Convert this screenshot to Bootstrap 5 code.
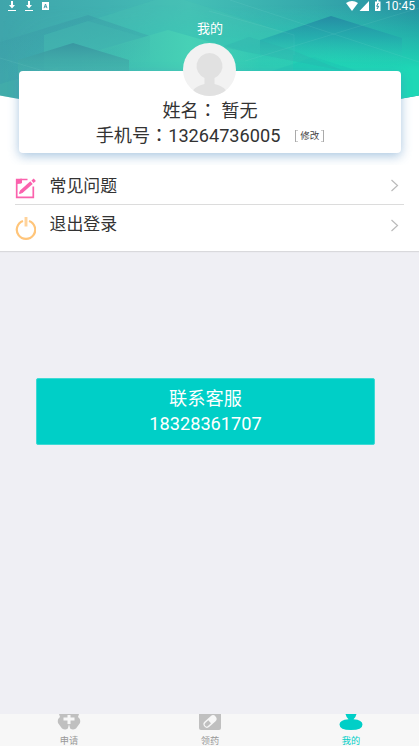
<!DOCTYPE html>
<html lang="zh-CN">
<head>
<meta charset="utf-8">
<meta name="viewport" content="width=device-width, initial-scale=1">
<title>我的</title>
<link href="https://cdn.jsdelivr.net/npm/bootstrap@5.3.0/dist/css/bootstrap.min.css" rel="stylesheet">
<style>
body{font-family:Roboto,"Noto Sans CJK SC",sans-serif;background:#efeff4;color:#333;height:746px;overflow:hidden}
svg{display:block;flex:none}
.profile-top{height:165px}
.hero-art{left:0;top:0;z-index:0}
.status-line{height:12px;padding:0 4px 0 7px;font-size:12px;line-height:13px}
.page-title{font-size:13px;line-height:18px;margin-top:8px;padding-left:1px}
.info-card{width:382px;height:82px;margin:33px 0 0 19px;border-radius:4px;box-shadow:0 3px 11px rgba(75,135,190,.48);font-size:18.15px;line-height:26px;padding-top:27px}
.info-line{height:25.5px}
.avatar{left:183px;top:43px;z-index:2}
.wide-colon{font-family:"Noto Sans CJK TC",sans-serif;line-height:1}
.edit-link{font-size:9.5px;line-height:11px;width:29px;height:12px;border:solid #aaa;border-width:0 1px;color:#444;margin-left:15px;background:linear-gradient(#ccc,#ccc) 0 0/2px 1px no-repeat,linear-gradient(#ccc,#ccc) 0 100%/2px 1px no-repeat,linear-gradient(#ccc,#ccc) 100% 0/2px 1px no-repeat,linear-gradient(#ccc,#ccc) 100% 100%/2px 1px no-repeat}
.menu-box{height:86px;box-shadow:0 1px 1px #d9d9dc}
.menu-line{height:39px;font-size:16.9px;line-height:42px;margin:0 15px;padding-right:5px}
.menu-text{margin-left:13.500px}
.menu-line+.menu-line{border-top:1px solid #dcdcdc;line-height:38px;height:46px}
.service-btn{width:339px;height:67px;margin:127px 0 0 36px;border-radius:2px;background:#00cfc7;border:1px solid #3edad4;font-size:18.2px;line-height:25px;padding-top:7px}
.tab-bar{height:32px;background:#f7f7f7;font-size:9.2px;line-height:12px;color:#999;padding:0 38px 0 39px}
.tab-item{width:60px}
.tab-item svg{margin-bottom:4px}
.tab-item.current{color:#00cfc7}
</style>
<script src="https://cdn.jsdelivr.net/npm/bootstrap@5.3.0/dist/js/bootstrap.bundle.min.js"></script>
</head>
<body class="d-flex flex-column">
<header class="profile-top bg-white position-relative overflow-hidden">
<svg class="hero-art position-absolute" width="419" height="100" viewBox="0 0 419 100">
<defs>
<linearGradient id="base" x1="0" y1="0" x2="1" y2="0"><stop stop-color="#3fa5ab"/><stop offset=".25" stop-color="#41b1b1"/><stop offset=".45" stop-color="#44bfb6"/><stop offset=".75" stop-color="#35a9ac"/><stop offset="1" stop-color="#278fa1"/></linearGradient>
<linearGradient id="low" x1="0" y1="0" x2="0" y2="1"><stop offset=".05" stop-color="#22d8b6" stop-opacity="0"/><stop offset=".7" stop-color="#1ed8b6"/></linearGradient>
<linearGradient id="fade" x1="0" y1="0" x2="1" y2="0"><stop stop-color="#fff" stop-opacity="0"/><stop offset=".2" stop-color="#fff" stop-opacity=".15"/><stop offset=".55" stop-color="#fff" stop-opacity=".7"/><stop offset=".8" stop-color="#fff"/></linearGradient>
<linearGradient id="ridge" x1="0" y1="0" x2="0" y2="1"><stop stop-color="#2488a3"/><stop offset=".35" stop-color="#23a8ad" stop-opacity=".75"/><stop offset=".8" stop-color="#2bd5b8" stop-opacity="0"/></linearGradient>
<linearGradient id="hill" x1="0" y1="0" x2="0" y2="1"><stop stop-color="#38929f"/><stop offset=".5" stop-color="#45b4ab" stop-opacity=".75"/><stop offset="1" stop-color="#45b4ab" stop-opacity=".3"/></linearGradient>
<linearGradient id="shade" x1="0" y1="0" x2="0" y2="1"><stop stop-color="#3998a6"/><stop offset=".7" stop-color="#3998a6" stop-opacity="0"/></linearGradient>
<linearGradient id="mint" x1="0" y1="0" x2="1" y2="0"><stop stop-color="#45bdae" stop-opacity=".2"/><stop offset=".6" stop-color="#48d2b6"/><stop offset="1" stop-color="#48d2b6" stop-opacity="0"/></linearGradient>
<mask id="m"><rect width="419" height="100" fill="url(#fade)"/></mask>
<clipPath id="c"><path d="M0 0H419V95.500Q400 99 380 102H40Q18 99 0 95.500Z"/></clipPath>
</defs>
<g clip-path="url(#c)">
<path fill="url(#base)" d="M0 0h419v100H0z"/>
<path fill="url(#low)" mask="url(#m)" d="M0 0h419v100H0z"/>
<path fill="#4bc9b5" opacity=".25" d="M44 35L155 0h30l108 35v65H44z"/>
<path fill="url(#shade)" opacity=".5" d="M0 42L88 15l62 21v64H0z"/>
<path fill="#45bbb1" opacity=".35" d="M44 35L88 21l55 16-61 23H44z"/>
<path fill="url(#mint)" opacity=".9" d="M82 55L168 30l92 26v44H82z"/>
<path fill="url(#hill)" opacity=".85" d="M18 60L73 43l56 17v40H18z"/>
<path fill="#48b8a9" opacity=".35" d="M0 84l58-17v33H0z"/>
<path fill="url(#ridge)" opacity=".9" d="M260 40L331 16l71 22v42H260z"/>
<path fill="#2fa9ac" opacity=".25" d="M222 47l27-10 45 14 50 20z"/>
<path fill="#1fbdb2" opacity=".3" d="M272 71l42-14 44 14z"/>
<path fill="none" stroke="#8ce0d7" stroke-opacity=".12" d="M0 58l90 27M230 0l189 62M245 61L419 8M209 11l85 24v20"/>
</g>
</svg>
<div class="status-line d-flex position-relative text-white">
<svg width="50" height="12" viewBox="0 0 50 12" fill="#fff"><path d="M4 1h2v4h2L5 8.500 2 5h2zM1 10h8v1H1zM21 1h2v4h2l-3 3.500L19 5h2zM18 10h8v1h-8zM35 2h7v8h-7z"/><path d="M37 8.200l1.500-4.200 1.500 4.200M37.500 6.800h2" fill="none" stroke="#3a9ba8" stroke-width=".9"/></svg>
<svg class="ms-auto" width="38" height="12" viewBox="0 0 38 12" fill="#fff"><path d="M3 3q6-4 12 0L9 11zM26 1v10h-9.500zM32 1.500h2V0h1.500v1.500h2V11H32z"/><path d="M35.300 3l-1.600 3.300h2L34 9" fill="none" stroke="#2788a0" stroke-width="1"/></svg>
<span class="ms-1">10:45</span>
</div>
<div class="page-title position-relative text-center text-white">我的</div>
<svg class="avatar position-absolute" width="53" height="53" viewBox="0 0 53 53"><clipPath id="av"><circle cx="26.500" cy="26.500" r="26.500"/></clipPath><g clip-path="url(#av)"><path fill="#f2f2f2" d="M0 0h53v53H0z"/><path fill="#e1e1e1" d="M26.500 10a13 13 0 0 0-5 25v6c-5 1-9 3-12 7v5h34v-5c-3-4-7-6-12-7v-6a13 13 0 0 0-5-25z"/></g></svg>
<section class="info-card bg-white position-relative">
<div class="info-line d-flex justify-content-center"><span>姓名<span class="wide-colon" lang="zh-TW">：</span> 暂无</span></div>
<div class="info-line d-flex justify-content-center align-items-center"><span>手机号<span class="wide-colon" lang="zh-TW">：</span>13264736005</span><a class="edit-link text-center text-decoration-none">修改</a></div>
</section>
</header>
<nav class="menu-box bg-white">
<div class="menu-line d-flex">
<svg class="mt-2" width="21" height="26" viewBox="0 0 21 26"><g transform="translate(0.500 4.500)" fill="none" stroke="#fb62ad"><path stroke-width="1.700" d="M12 2H1.200v17.800h16.600V9"/><path d="M1 6V3L6 1.500v4z" fill="#fb62ad"/><path stroke-width="3.600" d="M6 14L16 5.200"/><path stroke-width="3.200" d="M17 4.300l2.300-2"/><path d="M4 16l1-3 2 2z" fill="#fb62ad"/></g></svg>
<span class="menu-text">常见问题</span>
<svg class="ms-auto" width="8" height="40" viewBox="0 0 8 40"><path d="M.5 15L6.500 20.500.5 26" fill="none" stroke="#bbb" stroke-width="1.200"/></svg>
</div>
<div class="menu-line d-flex">
<svg width="21" height="38" viewBox="0 0 21 38"><path d="M8 16a9.200 9.200 0 1 0 6 0" fill="none" stroke="#ffc57a" stroke-width="2.200"/><path d="M11 12v9.500" stroke="#ffd39b" stroke-width="2.900"/></svg>
<span class="menu-text">退出登录</span>
<svg class="ms-auto" width="8" height="40" viewBox="0 0 8 40"><path d="M.5 15L6.500 20.500.5 26" fill="none" stroke="#bbb" stroke-width="1.200"/></svg>
</div>
</nav>
<a class="service-btn d-block text-center text-white text-decoration-none">联系客服<br>18328361707</a>
<footer class="tab-bar mt-auto d-flex justify-content-between">
<div class="tab-item d-flex flex-column align-items-center">
<svg width="24" height="17" viewBox="0 0 24 17"><path fill="#c0c0c0" d="M2 0h20l-1 3q3 2 2 6l-4 5.500q-4 2.500-7-1-3 3.500-7 1L1 9Q0 5 3 3z"/><path fill="#f7f7f7" d="M10.500 1h3v2.500h4v3h-4V10h-3V6.500h-4v-3h4zM12 10l1.500 6h-3z"/></svg><span>申请</span></div>
<div class="tab-item d-flex flex-column align-items-center">
<svg width="24" height="17" viewBox="0 0 24 17"><path fill="#c0c0c0" d="M1 0h22v14q0 2-2 2H3q-2 0-2-2z"/><g transform="rotate(-42 12 7.500)"><rect x="4.500" y="4" width="15" height="7" rx="3.500" fill="#f7f7f7"/><path d="M7.500 5.500h4v4h-4a2 2 0 0 1 0-4z" fill="#c0c0c0"/></g></svg><span>领药</span></div>
<div class="tab-item current d-flex flex-column align-items-center">
<svg width="24" height="17" viewBox="0 0 24 17"><path fill="#00cfc7" d="M6.500 0h11q-1 4-3 5.300 9 .7 9 5.200 0 5.500-11.500 5.500T.5 10.500q0-4.500 9-5.200-2-1.300-3-5.300z"/></svg><span>我的</span></div>
</footer>
</body>
</html>
